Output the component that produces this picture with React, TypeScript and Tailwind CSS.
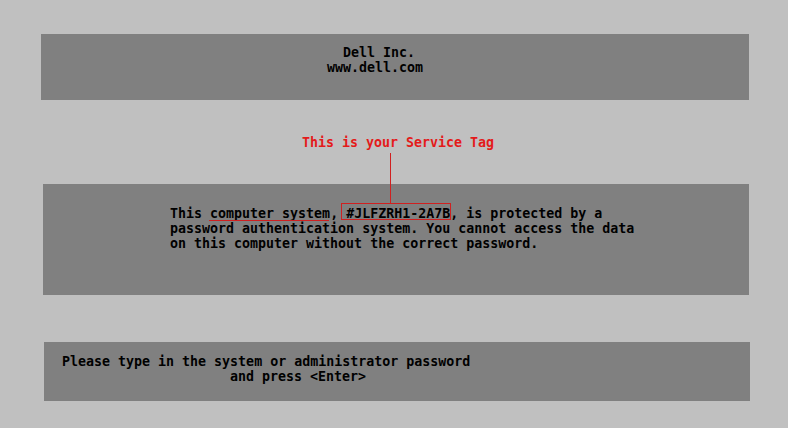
import React from "react";

const mono = "font-['DejaVu_Sans_Mono','Liberation_Mono',monospace] font-bold text-[13.3px] leading-[15px] whitespace-pre";

export default function App() {
  return (
    <div className="w-[788px] h-[428px] bg-[#c0c0c0] flex flex-col overflow-hidden text-black">
      <div className={`mt-[34px] ml-[41px] w-[708px] h-[66px] bg-[#808080] pt-[11px] pl-[286px] flex flex-col ${mono}`}>
        <div className="pl-[16px]">Dell Inc.</div>
        <div>www.dell.com</div>
      </div>
      <div className={`h-[84px] pt-[35px] pl-[302px] text-[#e41a1a] ${mono}`}>This is your Service Tag</div>
      <div className={`ml-[43px] w-[706px] h-[111px] bg-[#808080] pt-[22px] pl-[127px] flex flex-col ${mono}`}>
        <div>
          This{" "}
          <span className="relative">
            computer system
            <span className="absolute left-[-1px] top-[14px] w-[120px] h-px bg-[#d02020]" />
          </span>
          ,{" "}
          <span className="relative">
            #JLFZRH1-2A7B
            <span className="absolute left-[-5px] top-[-3px] w-[110px] h-px bg-[#d02020]" />
            <span className="absolute left-[-5px] top-[13px] w-[110px] h-px bg-[#d02020]" />
            <span className="absolute left-[-5px] top-[-3px] w-px h-[17px] bg-[#d02020]" />
            <span className="absolute left-[104px] top-[-3px] w-px h-[17px] bg-[#d02020]" />
            <span className="absolute left-[44px] top-[-53px] w-px h-[50px] bg-[#d02020]" />
          </span>
          , is protected by a
        </div>
        <div>password authentication system. You cannot access the data</div>
        <div>on this computer without the correct password.</div>
      </div>
      <div className={`mt-[47px] ml-[44px] w-[706px] h-[59px] bg-[#808080] pt-[12px] pl-[18px] flex flex-col ${mono}`}>
        <div>Please type in the system or administrator password</div>
        <div className="pl-[168px]">and press &lt;Enter&gt;</div>
      </div>
    </div>
  );
}
